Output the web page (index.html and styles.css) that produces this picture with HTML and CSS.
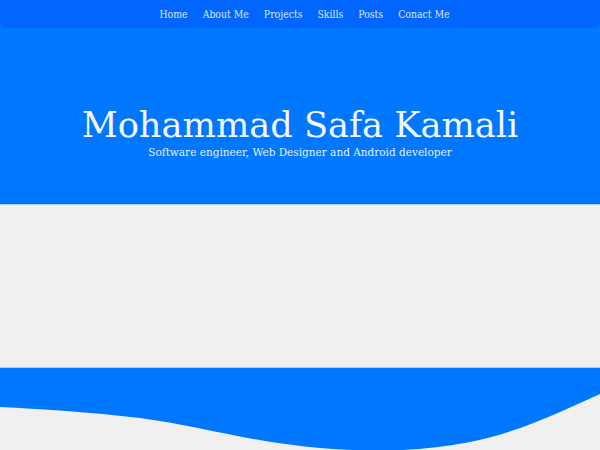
FILE: index.html
```html
<!DOCTYPE html>
<html>
<head>
<meta charset="utf-8">
<link rel="stylesheet" href="styles.css">
</head>
<body>
<header class="hero">
  <nav class="nav">
    <a href="#">Home</a>
    <a href="#">About Me</a>
    <a href="#">Projects</a>
    <a href="#">Skills</a>
    <a href="#">Posts</a>
    <a href="#">Conact Me</a>
  </nav>
  <div class="hero-text">
    <h1 class="title">Mohammad Safa Kamali</h1>
    <p class="subtitle">Software engineer, Web Designer and Android developer</p>
  </div>
</header>
<main class="content"></main>
<section class="wave-section">
  <svg class="wave" viewBox="0 0 600 83" preserveAspectRatio="none">
    <path d="M0 0 H600 V26 C560 44 520 64 470 74 C420 84 370 84 320 80 C250 74 200 58 140 50 C90 44 40 41 0 39 Z" fill="#0077ff"/>
  </svg>
</section>
</body>
</html>
```
FILE: styles.css
```css
html, body {
  margin: 0;
  padding: 0;
}
body {
  background: #f0f0f0;
  font-family: "DejaVu Serif", serif;
  width: 600px;
  height: 450px;
  overflow: hidden;
}
.hero {
  background: #0077ff;
  height: 205px;
  display: flex;
  flex-direction: column;
  border-bottom: 1px solid #a9cdf5;
  box-sizing: border-box;
}
.nav {
  background: #0066ff;
  height: 28px;
  border-radius: 0 0 6px 6px;
  display: flex;
  justify-content: center;
  align-items: center;
  gap: 15px;
  padding-left: 9px;
}
.nav a {
  color: #dce8fa;
  text-decoration: none;
  font-family: "DejaVu Serif Condensed", "DejaVu Serif", serif;
  font-stretch: condensed;
  font-size: 10.4px;
}
.hero-text {
  flex: 1;
  display: flex;
  flex-direction: column;
  align-items: center;
  padding-top: 75px;
  color: #ffffff;
}
.title {
  margin: 0;
  font-weight: normal;
  font-size: 35.2px;
  line-height: 43px;
  color: #f5f8ff;
}
.subtitle {
  margin: 0;
  font-size: 10.5px;
  line-height: 13px;
  color: #e8f0ff;
}
.content {
  height: 162px;
}
.wave-section {
  height: 83px;
  border-top: 1px solid #a9cdf5;
}
.wave {
  display: block;
  width: 600px;
  height: 83px;
}
```
